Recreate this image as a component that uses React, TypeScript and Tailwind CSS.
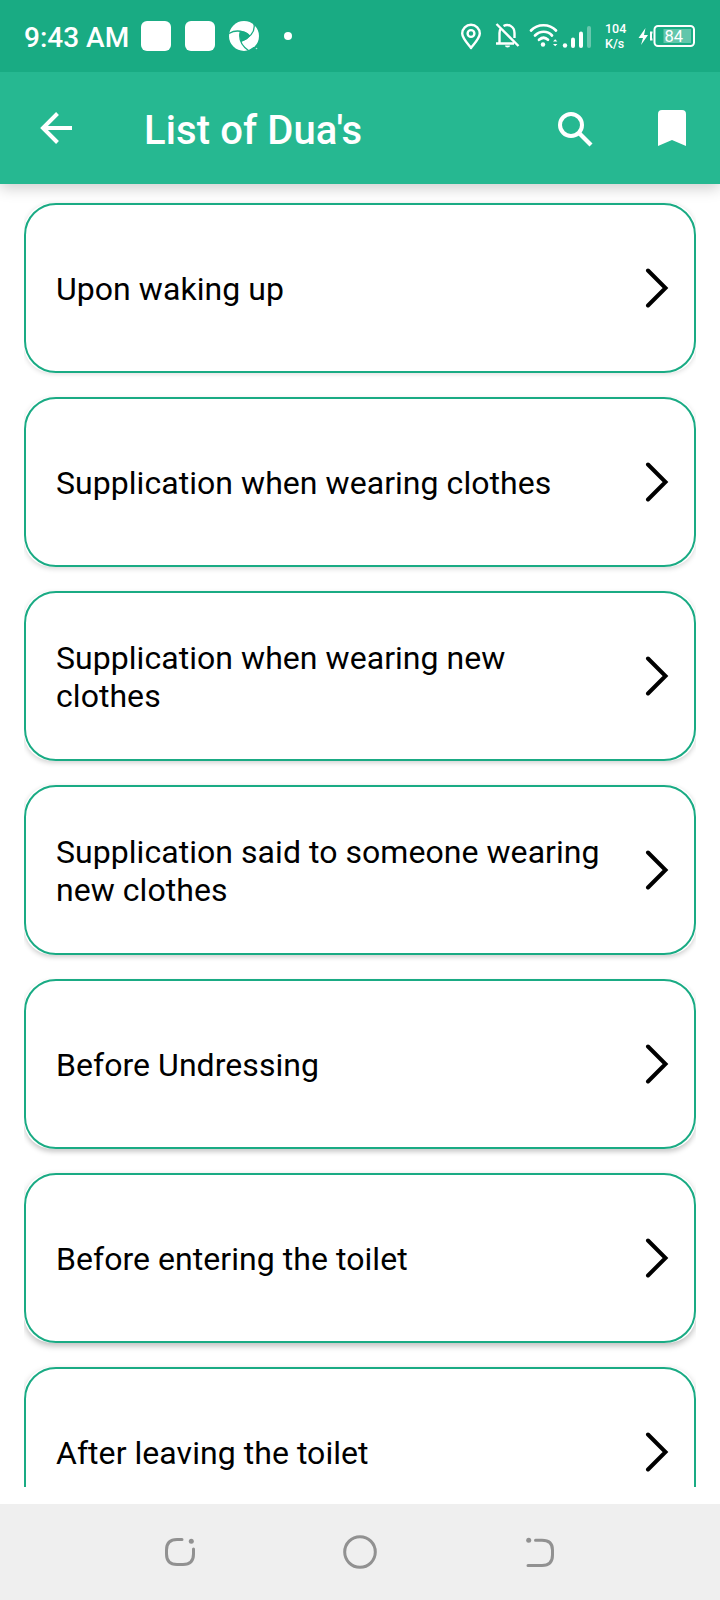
import React from "react";

const duas = [
  { title: "Upon waking up", shadow: "shadow-[0_1px_5px_rgba(0,0,0,0.14)]" },
  { title: "Supplication when wearing clothes", shadow: "shadow-[0_2px_5px_rgba(0,0,0,0.15)]" },
  { title: "Supplication when wearing new clothes", shadow: "shadow-[0_2px_5px_rgba(0,0,0,0.18)]" },
  { title: "Supplication said to someone wearing new clothes", shadow: "shadow-[0_2px_5px_rgba(0,0,0,0.20)]" },
  { title: "Before Undressing", shadow: "shadow-[0_3px_5px_rgba(0,0,0,0.21)]" },
  { title: "Before entering the toilet", shadow: "shadow-[0_3px_6px_rgba(0,0,0,0.26)]" },
  { title: "After leaving the toilet", shadow: "shadow-[0_3px_6px_rgba(0,0,0,0.26)]" },
];

function StatusBar() {
  return (
    <div className="relative z-20 flex h-[72px] shrink-0 items-center bg-[#19ab83] pl-6 text-white">
      <span className="w-[117px] whitespace-nowrap pt-[3px] text-[28px] leading-8 font-medium">9:43 AM</span>
      <div className="h-[30px] w-[30px] rounded-md bg-white" />
      <div className="ml-3.5 h-[30px] w-[30px] rounded-md bg-white" />
      <svg className="ml-3.5 h-[30px] w-[30px]" viewBox="0 0 30 30">
        <circle cx="15" cy="15" r="15" fill="white" />
        <path d="M11.300 10.500Q17.500 9.500 21 15Q17.500 19.500 12 20.500Q10 15 11.300 10.500Z" fill="#19ab83" />
        <g fill="none" stroke="#19ab83" strokeWidth="1.300">
          <path d="M0 12.500Q10 6.500 21 15" />
          <path d="M25 3Q27 14 12 20.500" />
          <path d="M19.500 29.500Q8.500 22 11.300 10.500" />
        </g>
        <path d="M18.500 30L24.500 26L30 28V30Z" fill="#19ab83" />
        <circle cx="27.500" cy="27.500" r="0.800" fill="white" opacity="0.700" />
      </svg>
      <div className="ml-[25px] h-2 w-2 rounded-full bg-white" />
      <svg className="ml-[168px] h-[28px] w-[22px]" viewBox="460 22 22 28" fill="none" stroke="white" strokeWidth="2.400">
        <path d="M471 48C468 44 462.200 38 462.200 33.500A8.800 8.800 0 0 1 479.800 33.500C479.800 38 474 44 471 48Z" strokeLinejoin="round" />
        <circle cx="471" cy="33.500" r="3.400" />
      </svg>
      <svg className="ml-[13px] h-[28px] w-[26px]" viewBox="495 22 26 28" fill="none" stroke="white" strokeWidth="2.400">
        <path d="M496.500 24L518.500 46M496 43.500H514M499.500 43V33C499.500 31 500 29.500 501 28.200M503.500 26C508 23.500 514.500 26 514.500 33V38" />
        <path d="M505 45.500H510A2.500 2 0 0 1 505 45.500Z" fill="white" stroke="none" />
      </svg>
      <svg className="ml-2 h-[28px] w-[64px]" viewBox="529 22 64 28" fill="none">
        <g stroke="white" strokeWidth="2.700" strokeLinecap="round">
          <path d="M531 30.500C537.500 23.500 549.500 23.500 556 30.500M535 35.500C540 30.500 547.500 30.500 552 35.500M539 39.800C542 37.300 545.500 37.300 548 39.800" />
        </g>
        <circle cx="543" cy="44.500" r="2.200" fill="white" />
        <path d="M553 41.500L555.200 39.200L557.400 41.500ZM553 44L555.200 46.300L557.400 44Z" fill="white" />
        <circle cx="565" cy="45.500" r="2.200" fill="white" />
        <rect x="571" y="37.500" width="4" height="10.500" rx="2" fill="white" />
        <rect x="579" y="31.500" width="4" height="16.500" rx="2" fill="white" />
        <rect x="587" y="26" width="4" height="22" rx="2" fill="white" opacity="0.350" />
      </svg>
      <div className="ml-3 w-[33px] text-[12.500px] leading-[15px] font-medium">
        <div>104</div>
        <div>K/s</div>
      </div>
      <svg className="h-[26px] w-[60px]" viewBox="638.500 23 60 26" fill="none">
        <path d="M646 28L639 38H643.500L641.500 45L648.500 35H644.500Z" fill="white" />
        <path d="M653 32.500H651.500V39.500H653" stroke="white" strokeWidth="2" />
        <rect x="655" y="26" width="39.500" height="20" rx="3.500" stroke="white" strokeWidth="2" />
        <rect x="664" y="29" width="27.500" height="14" fill="white" opacity="0.320" />
        <text x="665" y="41.800" fill="white" fontSize="16.500" fontWeight="400" fontFamily="Roboto, sans-serif">84</text>
      </svg>
    </div>
  );
}

function AppBar() {
  return (
    <header className="relative z-10 flex h-28 shrink-0 items-center bg-[#26b891] pl-10 text-white shadow-[0_4px_14px_rgba(0,0,0,0.2)]">
      <svg className="h-8 w-8" viewBox="0 0 32 32" fill="none" stroke="white" strokeWidth="4">
        <path d="M32 16H4M17.500 1.500L3 16L17.500 30.500" />
      </svg>
      <h1 className="ml-[72px] w-[412px] pt-1.5 text-[40px] leading-[48px] font-medium tracking-[0.1px]">List of Dua's</h1>
      <svg className="h-9 w-9 overflow-visible" viewBox="0 0 36 36" fill="none" stroke="white">
        <circle cx="15" cy="15" r="11" strokeWidth="4" />
        <path d="M23.500 23.500L35 35" strokeWidth="4.200" />
      </svg>
      <svg className="ml-[66px] h-9 w-7" viewBox="0 0 28 36" fill="white">
        <path d="M4 0H24Q28 0 28 4V36L14 30L0 36V4Q0 0 4 0Z" />
      </svg>
    </header>
  );
}

function NavigationBar() {
  return (
    <nav className="flex h-24 shrink-0 items-center justify-between bg-[#efefef] px-[164px] text-[#919191]">
      <svg className="h-8 w-8" viewBox="164 1536 32 32" fill="none" stroke="currentColor" strokeWidth="3" strokeLinecap="round">
        <path d="M182 1539.500H177C170 1539.500 166.500 1543 166.500 1550V1554C166.500 1561 170 1564.500 177 1564.500H183C190 1564.500 193.500 1561 193.500 1554V1549" />
        <circle cx="191.300" cy="1541.300" r="2.500" fill="currentColor" stroke="none" />
      </svg>
      <svg className="h-9 w-9" viewBox="0 0 36 36" fill="none" stroke="currentColor" strokeWidth="3">
        <circle cx="18" cy="18" r="15.300" />
      </svg>
      <svg className="h-8 w-8" viewBox="524 1536 32 32" fill="none" stroke="currentColor" strokeWidth="3" strokeLinecap="round">
        <path d="M535.500 1540.200H542C549 1540.200 552.500 1543.500 552.500 1550V1555C552.500 1562 549 1565.500 542 1565.500H528" />
        <circle cx="528.700" cy="1540.200" r="2.500" fill="currentColor" stroke="none" />
      </svg>
    </nav>
  );
}

export default function App() {
  return (
    <div className="flex h-[1600px] w-[720px] flex-col overflow-hidden bg-white font-[Roboto,sans-serif]">
      <StatusBar />
      <AppBar />
      <main className="mx-6 mb-[17px] flex min-h-0 flex-1 flex-col gap-6 overflow-hidden pt-[19px]">
        {duas.map((dua) => (
          <div key={dua.title} className={`h-[170px] shrink-0 rounded-[28px] bg-white ${dua.shadow}`}>
            <button className="flex h-full w-full items-center rounded-[32px] border-2 border-[#1aab84] pl-[30px] text-left">
              <span className="w-[560px] pt-px text-[32px] leading-[38px] tracking-[0.05px] text-black">{dua.title}</span>
              <svg className="ml-[29px] h-10 w-6" viewBox="0 0 24 40" fill="none" stroke="black" strokeWidth="4" strokeLinecap="round" strokeLinejoin="miter">
                <path d="M3 2.500L20.500 20L3 37.500" />
              </svg>
            </button>
          </div>
        ))}
      </main>
      <NavigationBar />
    </div>
  );
}
